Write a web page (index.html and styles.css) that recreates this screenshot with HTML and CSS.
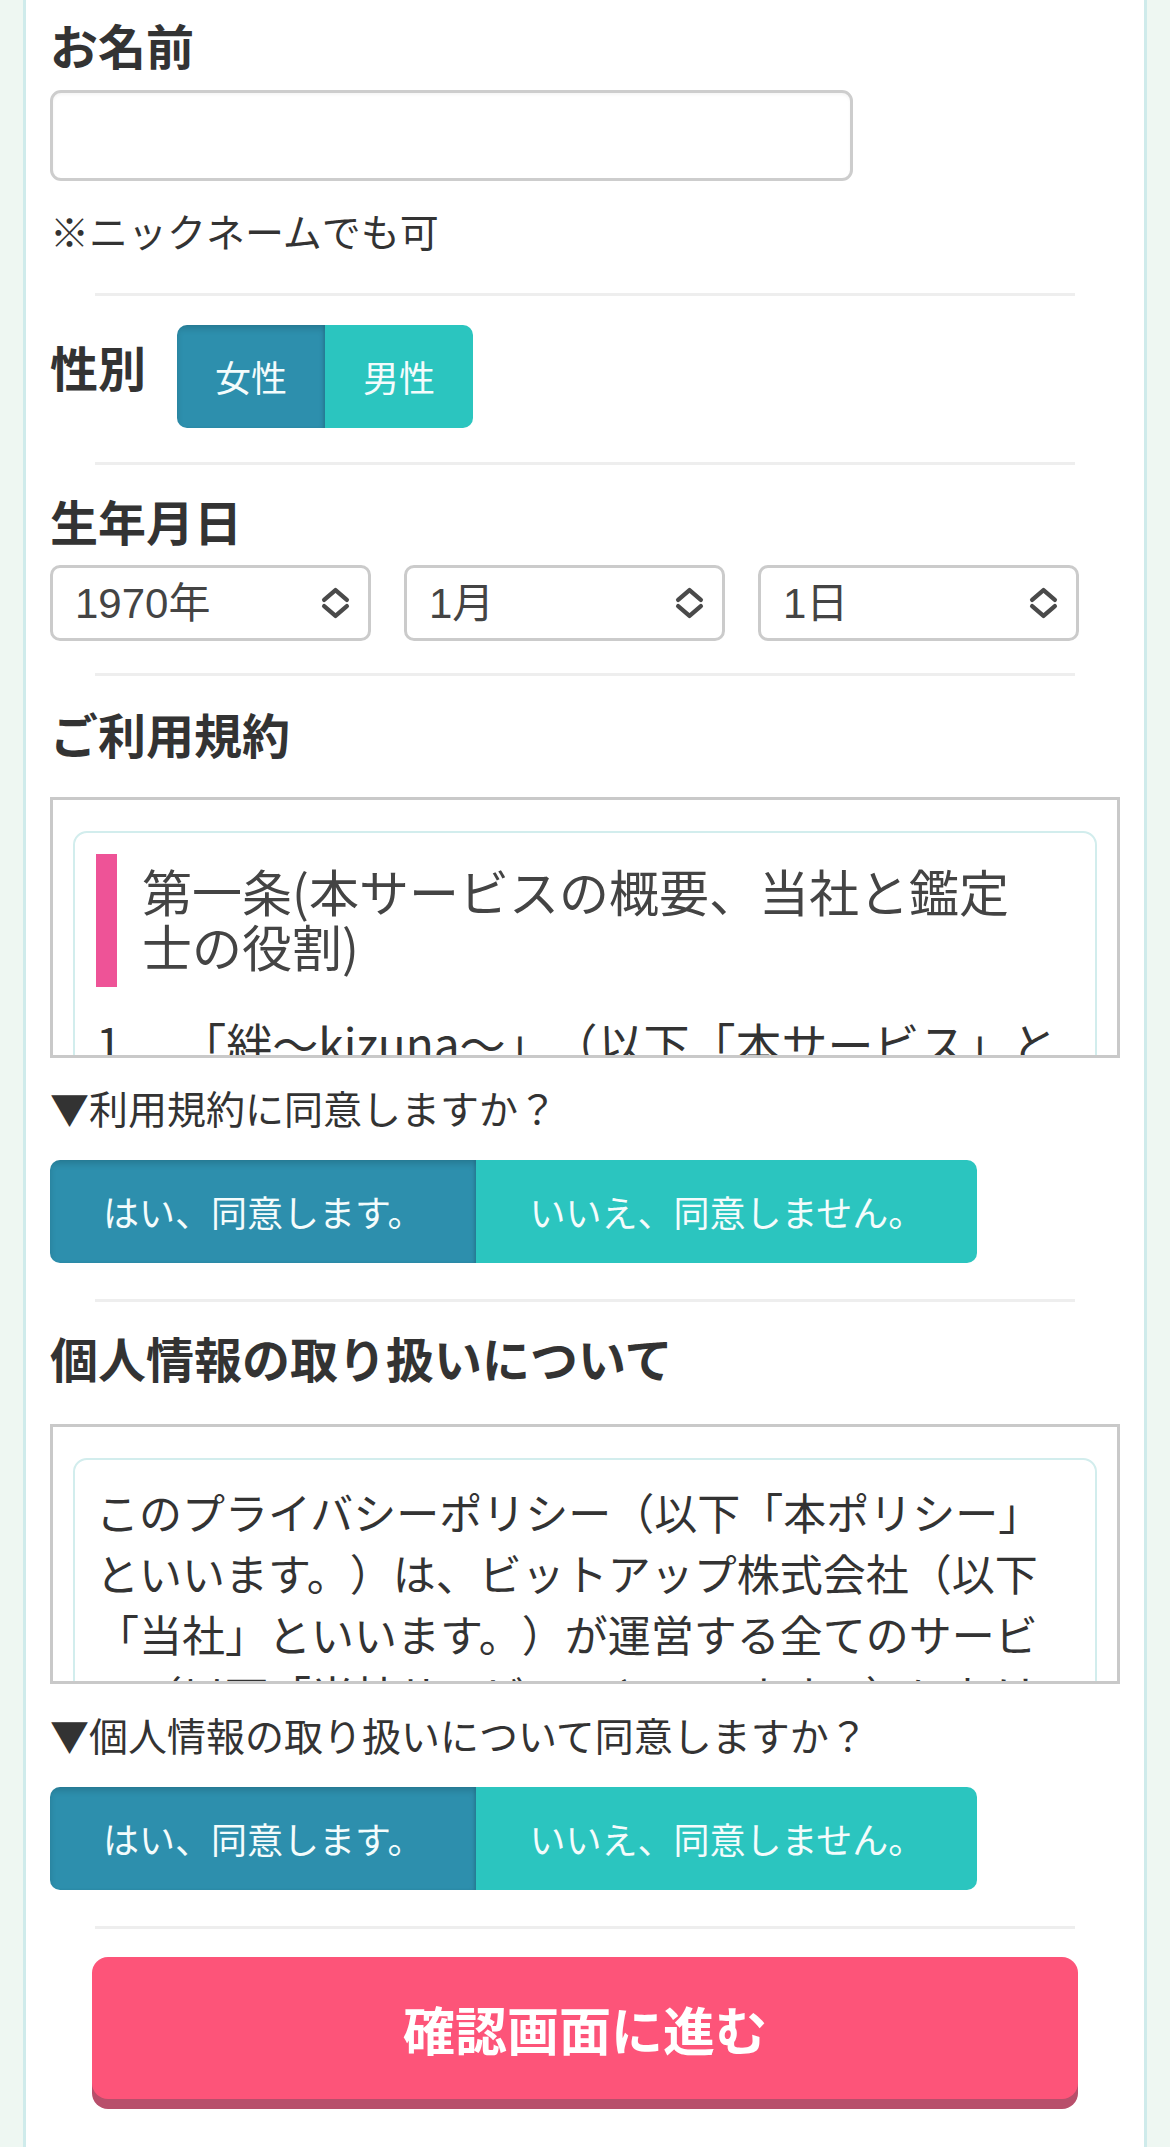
FILE: index.html
```html
<!DOCTYPE html>
<html lang="ja">
<head>
<meta charset="utf-8">
<title>フォーム</title>
<link rel="stylesheet" href="styles.css">
</head>
<body>
<div class="card">
  <section class="field">
    <h2 class="label">お名前</h2>
    <input type="text" class="text-input">
    <p class="note">※ニックネームでも可</p>
  </section>
  <hr class="divider">
  <section class="field gender-row">
    <h2 class="label">性別</h2>
    <div class="seg seg-gender">
      <span class="seg-btn active">女性</span><span class="seg-btn">男性</span>
    </div>
  </section>
  <hr class="divider">
  <section class="field sec-dob">
    <h2 class="label">生年月日</h2>
    <div class="selects">
      <div class="select-wrap">
        <select class="select"><option>1970年</option></select>
        <svg class="chev" viewBox="0 0 30 32"><path d="M4 13 L15 3.5 L26 13 M4 19 L15 28.5 L26 19" fill="none" stroke="#4a4a4a" stroke-width="4.2" stroke-linecap="round" stroke-linejoin="round"/></svg>
      </div>
      <div class="select-wrap">
        <select class="select"><option>1月</option></select>
        <svg class="chev" viewBox="0 0 30 32"><path d="M4 13 L15 3.5 L26 13 M4 19 L15 28.5 L26 19" fill="none" stroke="#4a4a4a" stroke-width="4.2" stroke-linecap="round" stroke-linejoin="round"/></svg>
      </div>
      <div class="select-wrap">
        <select class="select"><option>1日</option></select>
        <svg class="chev" viewBox="0 0 30 32"><path d="M4 13 L15 3.5 L26 13 M4 19 L15 28.5 L26 19" fill="none" stroke="#4a4a4a" stroke-width="4.2" stroke-linecap="round" stroke-linejoin="round"/></svg>
      </div>
    </div>
  </section>
  <hr class="divider divider-dob">
  <section class="field sec-terms">
    <h2 class="label">ご利用規約</h2>
    <div class="doc doc-terms">
      <div class="doc-card">
        <h3 class="doc-title">第一条(本サービスの概要、当社と鑑定士の役割)</h3>
        <p class="doc-text terms-text">1.　「絆〜kizuna〜」（以下「本サービス」といいます。）は、当社が運営する占いサービスです。当社は鑑定士とお客様との間で鑑定の場を提供します。</p>
      </div>
    </div>
    <p class="question">▼利用規約に同意しますか？</p>
    <div class="seg seg-agree">
      <span class="seg-btn active">はい、同意します。</span><span class="seg-btn">いいえ、同意しません。</span>
    </div>
  </section>
  <hr class="divider">
  <section class="field sec-privacy">
    <h2 class="label">個人情報の取り扱いについて</h2>
    <div class="doc doc-privacy">
      <div class="doc-card">
        <p class="doc-text privacy-text">このプライバシーポリシー（以下「本ポリシー」といいます。）は、ビットアップ株式会社（以下「当社」といいます。）が運営する全てのサービス（以下「当社サービス」といいます。）における、お客様の個人情報の取り扱いについて定めるものです。</p>
      </div>
    </div>
    <p class="question question-privacy">▼個人情報の取り扱いについて同意しますか？</p>
    <div class="seg seg-agree">
      <span class="seg-btn active">はい、同意します。</span><span class="seg-btn">いいえ、同意しません。</span>
    </div>
  </section>
  <hr class="divider">
  <button type="button" class="submit">確認画面に進む</button>
</div>
</body>
</html>
```

FILE: styles.css
```css
html, body {
  margin: 0;
  padding: 0;
}
body {
  background: #eef7f2;
  font-family: "Noto Sans CJK JP", sans-serif;
  color: #333;
  text-spacing-trim: space-all;
}
.card {
  margin: 0 23px;
  min-height: 2147px;
  box-sizing: border-box;
  background: #fff;
  border-left: 3px solid #cfebeb;
  border-right: 3px solid #cfebeb;
  padding: 15px 24px 40px;
}
.field {
  margin: 0;
}
.label {
  margin: 0;
  font-size: 48px;
  line-height: 58px;
  font-weight: 700;
  color: #333;
}
.text-input {
  display: block;
  width: 75%;
  height: 91px;
  margin: 17px 0 0;
  box-sizing: border-box;
  border: 3px solid #cdcdcd;
  border-radius: 11px;
  background: #fff;
  box-shadow: inset 0 2px 3px rgba(0, 0, 0, 0.04);
  outline: none;
}
.note {
  margin: 20px 0 0;
  font-size: 39px;
  line-height: 58px;
  color: #333;
}
.divider {
  border: 0;
  height: 3px;
  background: #eeeeee;
  margin: 34px 45px 0;
}
.gender-row {
  display: flex;
  align-items: flex-start;
  gap: 31px;
  margin-top: 29px;
}
.gender-row .label {
  margin-top: 12px;
}
.seg {
  display: inline-flex;
  border-radius: 10px;
  overflow: hidden;
  vertical-align: top;
}
.seg-btn {
  display: block;
  height: 103px;
  line-height: 103px;
  padding: 0 53px;
  font-size: 36px;
  color: #f4fcfc;
  background: #2bc5bf;
  white-space: nowrap;
}
.seg-btn.active {
  background: #2d8fad;
  box-shadow: inset 0 4px 6px rgba(0, 0, 0, 0.14), inset -2px 0 2px rgba(0, 0, 0, 0.08);
}
.seg-gender .seg-btn {
  padding: 0 38px;
}
.sec-dob {
  margin-top: 26px;
}
.selects {
  display: flex;
  gap: 33px;
  margin-top: 16px;
}
.select-wrap {
  position: relative;
  width: 30%;
}
.select {
  -webkit-appearance: none;
  appearance: none;
  display: block;
  width: 100%;
  height: 76px;
  box-sizing: border-box;
  border: 3px solid #cbcbcb;
  border-radius: 10px;
  background: #fff;
  padding: 0 0 0 22px;
  font-family: "Liberation Sans", "Noto Sans CJK JP", sans-serif;
  font-size: 42px;
  color: #444;
  outline: none;
}
.chev {
  position: absolute;
  right: 20px;
  top: 21px;
  width: 31px;
  height: 34px;
  pointer-events: none;
}
.divider-dob {
  margin-top: 32px;
}
.sec-terms {
  margin-top: 28px;
}
.sec-privacy {
  margin-top: 26px;
}
.doc {
  margin-top: 35px;
  height: 261px;
  box-sizing: border-box;
  border: 3px solid #c9c9c9;
  overflow: hidden;
  padding: 31px 20px 0;
  background: #fff;
}
.doc-privacy {
  margin-top: 38px;
  height: 260px;
}
.doc-card {
  border: 2px solid #d2eded;
  border-radius: 14px;
  padding: 21px;
}
.doc-title {
  margin: 0;
  font-size: 50px;
  line-height: 55px;
  font-weight: 400;
  color: #444;
  border-left: 21px solid #ee5397;
  padding: 9px 30px 14px 25px;
}
.doc-text {
  margin: 0;
  color: #333;
}
.terms-text {
  margin-top: 21px;
  font-size: 46px;
  line-height: 69px;
}
.privacy-text {
  padding-right: 20px;
  font-size: 43px;
  line-height: 61px;
}
.question {
  margin: 20px 0 24px;
  font-size: 39px;
  line-height: 58px;
  color: #333;
}
.question-privacy {
  margin-top: 21px;
}
.sec-privacy + .divider,
.sec-terms + .divider {
  margin-top: 36px;
}
.submit {
  display: block;
  width: calc(100% - 84px);
  height: 142px;
  margin: 28px 42px 0;
  border: 0;
  border-radius: 16px;
  background: #fd5479;
  box-shadow: 0 10px 0 #b84f6b;
  color: #fff;
  font-family: "Noto Sans CJK JP", sans-serif;
  font-size: 52px;
  font-weight: 700;
  cursor: pointer;
}
```
